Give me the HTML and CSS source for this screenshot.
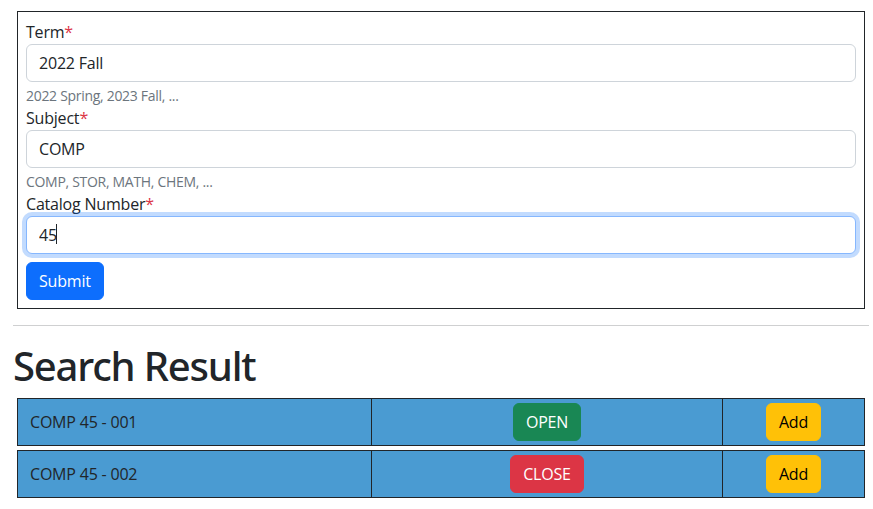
FILE: index.html
```html
<!DOCTYPE html>
<html lang="en">
<head>
<meta charset="utf-8">
<title>Course Search</title>
<link rel="stylesheet" href="styles.css">
</head>
<body>
<div class="page">
  <form class="search-form">
    <label class="field-label">Term<span class="req">*</span></label>
    <input class="field-input" type="text" value="2022 Fall">
    <div class="field-help">2022 Spring, 2023 Fall, ...</div>
    <label class="field-label">Subject<span class="req">*</span></label>
    <input class="field-input" type="text" value="COMP">
    <div class="field-help">COMP, STOR, MATH, CHEM, ...</div>
    <label class="field-label">Catalog Number<span class="req">*</span></label>
    <div class="input-wrap">
      <input class="field-input is-focused" type="text" value="45">
      <span class="caret"></span>
    </div>
    <button class="btn btn-primary submit-btn" type="button">Submit</button>
  </form>
  <hr class="divider">
  <h1 class="title">Search Result</h1>
  <div class="results">
    <div class="result-row">
      <div class="cell cell-name">COMP 45 - 001</div>
      <div class="cell cell-status"><span class="btn btn-success">OPEN</span></div>
      <div class="cell cell-action"><span class="btn btn-warning">Add</span></div>
    </div>
    <div class="result-row">
      <div class="cell cell-name">COMP 45 - 002</div>
      <div class="cell cell-status"><span class="btn btn-danger">CLOSE</span></div>
      <div class="cell cell-action"><span class="btn btn-warning">Add</span></div>
    </div>
  </div>
</div>
</body>
</html>
```
FILE: styles.css
```css
* { box-sizing: border-box; }
html, body { margin: 0; padding: 0; background: #fff; }
body {
  font-family: "Open Sans", "Liberation Sans", sans-serif;
  font-size: 16px;
  line-height: 24px;
  letter-spacing: -0.2px;
  color: #212529;
}
.page {
  padding: 11px 4px 0 13px;
}
.search-form {
  margin: 0 4px;
  border: 1px solid #212529;
  padding: 8px;
  display: flex;
  flex-direction: column;
  align-items: stretch;
}
.field-label {
  display: block;
  height: 24px;
  line-height: 24px;
}
.req { color: #dc3545; }
.field-input {
  display: block;
  width: 100%;
  height: 38px;
  padding: 6px 12px;
  font: inherit;
  font-size: 16px;
  line-height: 24px;
  letter-spacing: -0.2px;
  color: #212529;
  background: #fff;
  border: 1px solid #ced4da;
  border-radius: 6px;
  outline: none;
}
.field-input.is-focused {
  border-color: #86b7fe;
  box-shadow: 0 0 0 4px rgba(13, 110, 253, 0.25);
}
.input-wrap { position: relative; }
.caret {
  position: absolute;
  left: 30px;
  top: 8px;
  width: 1px;
  height: 20px;
  background: #212529;
}
.field-help {
  margin-top: 4px;
  font-size: 14px;
  line-height: 20px;
  letter-spacing: -0.3px;
  color: #6c757d;
}
.btn {
  display: inline-block;
  padding: 6px 12px;
  font-family: inherit;
  font-size: 16px;
  line-height: 24px;
  letter-spacing: -0.2px;
  border: 1px solid transparent;
  border-radius: 6px;
  text-align: center;
}
.btn-primary { background: #0d6efd; border-color: #0d6efd; color: #fff; }
.btn-success { background: #198754; border-color: #198754; color: #fff; }
.btn-danger { background: #dc3545; border-color: #dc3545; color: #fff; }
.btn-warning { background: #ffc107; border-color: #ffc107; color: #000; }
.submit-btn {
  align-self: flex-start;
  margin-top: 8px;
}
.divider {
  margin: 16px 0;
  border: 0;
  border-top: 1px solid #cfd0d1;
  height: 0;
}
.title {
  margin: 0 0 8px 0;
  font-family: "Noto Sans", "Open Sans", sans-serif;
  font-size: 40px;
  line-height: 48px;
  font-weight: 500;
  letter-spacing: -1.2px;
}
.results {
  margin: 0 4px;
  display: flex;
  flex-direction: column;
  gap: 4px;
}
.result-row {
  display: flex;
  height: 48px;
  border: 1px solid #212529;
  background: #4a9bd2;
}
.cell {
  display: flex;
  align-items: center;
  padding: 4px 12px;
}
.cell-name { width: 353px; }
.cell-status {
  width: 351px;
  border-left: 1px solid #212529;
  justify-content: center;
}
.cell-action {
  flex: 1;
  border-left: 1px solid #212529;
  justify-content: center;
}
```
